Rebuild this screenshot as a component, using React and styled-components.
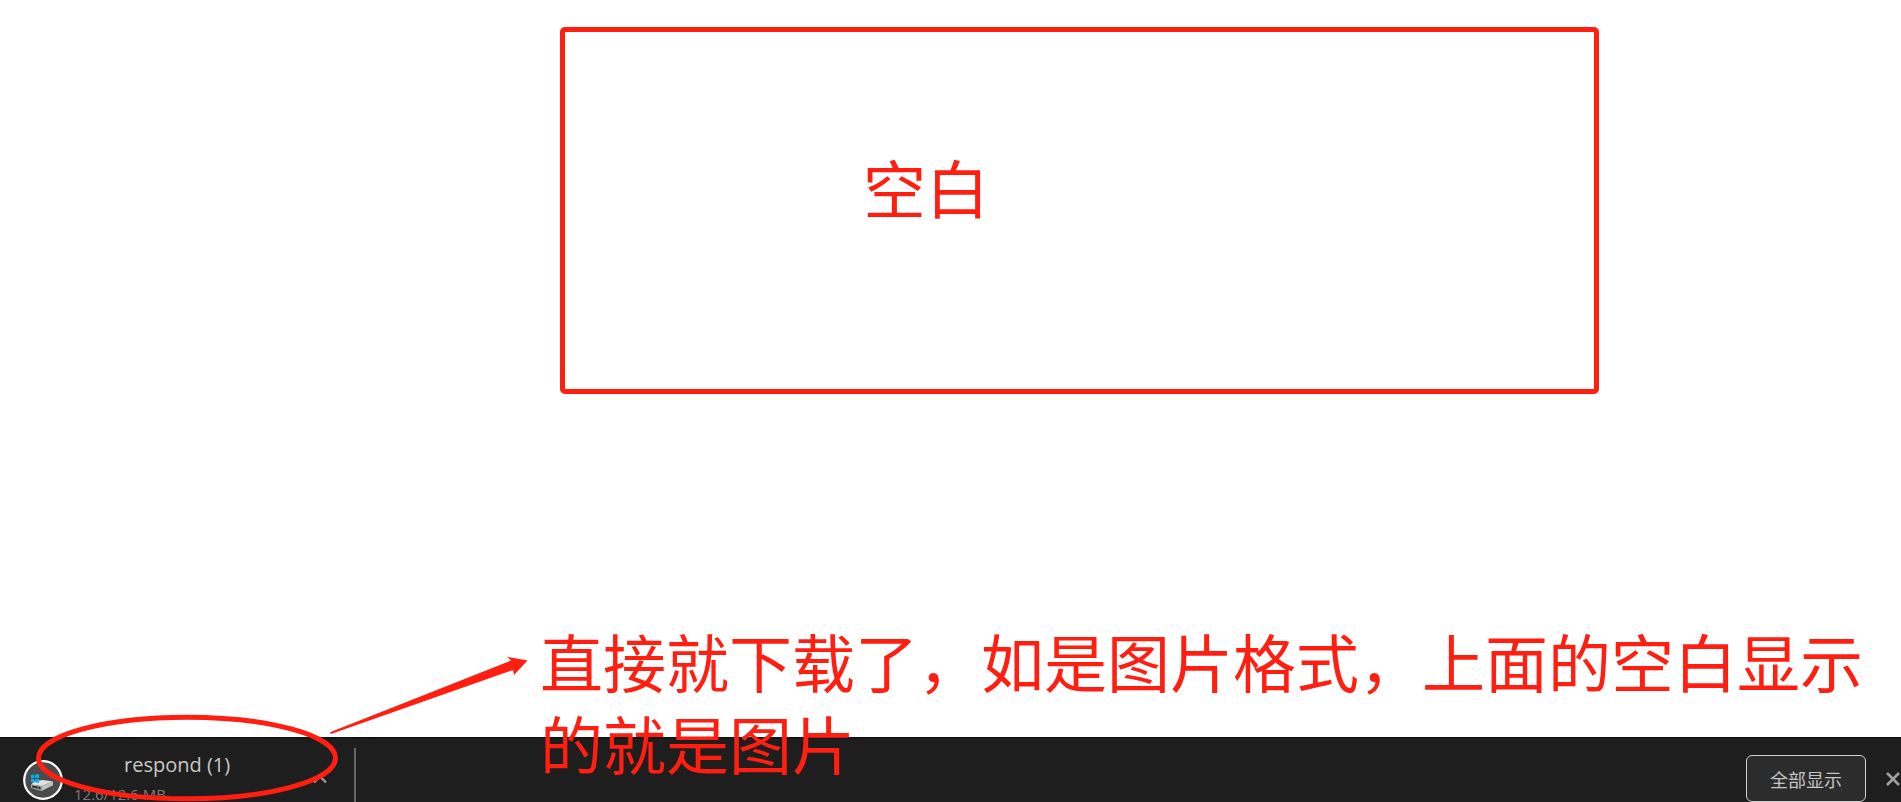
import styled, { createGlobalStyle } from 'styled-components';

const red = '#ff1e10';

export default function App() {
  return (
    <Page>
      <GlobalStyle />
      <Viewer>
        <EmptyFrame>空白</EmptyFrame>
      </Viewer>
      <DownloadShelf>
        <DownloadItem>
          <DiskBadge />
          <FileInfo>
            <FileName href="#respond">respond (1)</FileName>
            <FileSize>12.6/12.6 MB</FileSize>
          </FileInfo>
          <IconButton type="button" aria-label="更多选项">
            <Chevron />
          </IconButton>
        </DownloadItem>
        <ShelfActions>
          <ShowAll type="button">全部显示</ShowAll>
          <IconButton type="button" aria-label="关闭">
            <Cross />
          </IconButton>
        </ShelfActions>
        <Marker />
        <Note>直接就下载了，如是图片格式，上面的空白显示的就是图片</Note>
      </DownloadShelf>
    </Page>
  );
}

function DiskBadge() {
  return (
    <svg width="40" height="40" viewBox="0 0 40 40" aria-hidden="true">
      <circle cx="20" cy="20" r="18.8" fill="#4b4b4b" stroke="#fff" strokeWidth="2.2" />
      <path d="M8 24.5 L12 21 L20 20 L30 21.6 L18.5 26 Z" fill="#e2e2e2" />
      <path d="M18.5 26 L30 21.6 L30 25.2 L18.5 31 Z" fill="#c2c2c2" />
      <path d="M8 24.5 L18.5 26 L18.5 31 L8 28 Z" fill="#a8a8a8" />
      <path d="M9 25.6 L17.5 27 L17.5 29.6 L9 27.2 Z" fill="#2a2a2a" />
      <path d="M14 27.3 L15.8 27.6 L15.8 28.8 L14 28.4 Z" fill="#2fc43a" />
      <path d="M8 15 L11.4 14.6 L11.4 18 L8 18 Z M12.3 14.4 L16 14 L16 18 L12.3 18 Z M8 19 L11.4 19 L11.4 22.4 L8 22 Z M12.3 19 L16 19 L16 23 L12.3 22.5 Z" fill="#00b4f0" />
    </svg>
  );
}

function Chevron() {
  return (
    <svg width="14" height="14" viewBox="0 0 14 14" aria-hidden="true">
      <path d="M1 10.5 L7 4.5 L13 10.5" fill="none" stroke="#999" strokeWidth="2.4" />
    </svg>
  );
}

function Cross() {
  return (
    <svg width="14" height="14" viewBox="0 0 14 14" aria-hidden="true">
      <path d="M1 1 L13 13 M13 1 L1 13" fill="none" stroke="#a0a0a0" strokeWidth="2.6" />
    </svg>
  );
}

// ellipse round the download plus the arrow that leads to the note
function Marker() {
  return (
    <MarkerSvg width="530" height="146" viewBox="0 656 530 146" aria-hidden="true">
      <ellipse cx="187" cy="758" rx="148.5" ry="40.8" fill="none" stroke={red} strokeWidth="5" />
      <path d="M330 732.3 L511 660.5 L507 656.7 L527.5 660.5 L514 675 L513 670 L331 734 Z" fill={red} />
    </MarkerSvg>
  );
}

const GlobalStyle = createGlobalStyle`
  * {
    box-sizing: border-box;
  }

  body {
    margin: 0;
    background: #fff;
    font-family: "Open Sans", "Noto Sans CJK SC", sans-serif;
  }
`;

const Page = styled.div`
  display: flex;
  flex-direction: column;
  min-height: 100vh;
  overflow: hidden;
`;

const Viewer = styled.main`
  flex: 1;
  padding: 27px 302px 0 560px;
`;

const EmptyFrame = styled.div`
  height: 367px;
  padding: 116px 0 0 298px;
  border: 5px solid ${red};
  border-radius: 5px;
  color: ${red};
  font-size: 63px;
  line-height: 82px;
`;

const DownloadShelf = styled.footer`
  position: relative;
  display: flex;
  justify-content: space-between;
  height: 65px;
  border-top: 2px solid #141414;
  background: #1e1e1e;
`;

const DownloadItem = styled.div`
  display: flex;
  gap: 11px;
  width: 356px;
  margin-top: 9px;
  padding: 12px 27px 0 23px;
  border-right: 2px solid #666;
`;

const FileInfo = styled.div`
  display: flex;
  flex: 1;
  flex-direction: column;
  margin-top: -12px;
`;

const FileName = styled.a`
  padding-left: 50px;
  color: #c8c8c8;
  font-size: 20px;
  line-height: 34px;
  text-decoration: none;
`;

const FileSize = styled.span`
  color: #7c7c7c;
  font-size: 15px;
  line-height: 24px;
`;

const IconButton = styled.button`
  display: grid;
  place-items: center;
  height: 38px;
  padding: 0;
  border: none;
  background: none;
  cursor: pointer;
`;

const ShelfActions = styled.div`
  display: flex;
  align-items: center;
  gap: 20px;
  height: 47px;
  margin-top: 16px;
  padding-right: 1px;
`;

const ShowAll = styled.button`
  width: 120px;
  height: 47px;
  padding: 0;
  border: 1px solid #d0d0d0;
  border-radius: 6px;
  background: #2c2c2c;
  color: #c4c4c4;
  font-family: inherit;
  font-size: 18px;
  cursor: pointer;
`;

const MarkerSvg = styled.svg`
  position: absolute;
  bottom: 0;
  left: 0;
  pointer-events: none;
`;

const Note = styled.p`
  position: absolute;
  top: -117px;
  right: 20px;
  left: 540px;
  margin: 0;
  color: ${red};
  font-size: 63px;
  line-height: 82px;
  pointer-events: none;
`;
